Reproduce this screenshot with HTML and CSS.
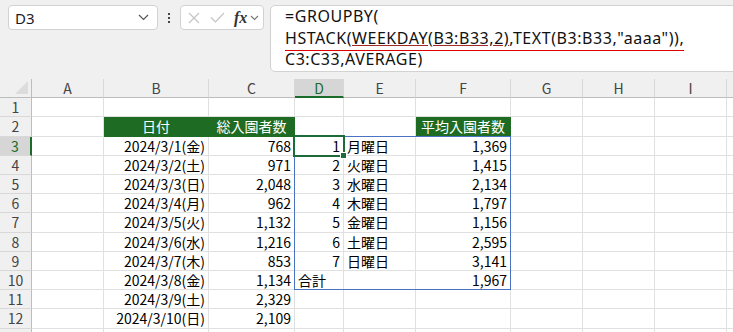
FILE: index.html
```html
<!DOCTYPE html>
<html lang="ja">
  <head>
    <meta charset="UTF-8" />
    <meta name="viewport" content="width=device-width, initial-scale=1" />
    <title>GROUPBY - 曜日別平均入園者数</title>
    <link rel="stylesheet" href="styles.css">
  </head>
  <body>
    <header class="topbar">
      <div class="namebox">
        <span class="namebox-ref">D3</span>
        <svg class="chevron" width="11" height="7" viewBox="0 0 11 7">
          <path d="M1 1l4.5 4.5L10 1" fill="none" stroke="#555" stroke-width="1.2" />
        </svg>
      </div>
      <div class="dots"><i></i><i></i><i></i></div>
      <div class="fxbox">
        <svg width="12" height="12" viewBox="0 0 12 12">
          <path d="M1 1l10 10M11 1L1 11" stroke="#c4c4c4" stroke-width="1.2" />
        </svg>
        <svg width="15" height="11" viewBox="0 0 15 11">
          <path d="M1 5.5l4.5 4.5L14 1" fill="none" stroke="#c4c4c4" stroke-width="1.2" />
        </svg>
        <span class="fx">fx</span>
        <svg width="9" height="6" viewBox="0 0 9 6">
          <path d="M1 1l3.5 3.5L8 1" fill="none" stroke="#777" stroke-width="1.1" />
        </svg>
      </div>
      <div class="formula">
        <div>=GROUPBY(</div>
        <div><span class="err">HSTACK(<span class="warn">WEEKDAY(B3:B33,2)</span>,TEXT(B3:B33,"aaaa")),</span></div>
        <div>C3:C33,AVERAGE)</div>
      </div>
    </header>

    <main class="sheet" id="sheet">
      <div class="spill"></div>
      <div class="selection"><span class="handle"></span></div>
    </main>

    <script>
      const columns = ["A", "B", "C", "D", "E", "F", "G", "H", "I", ""];

      // 行ごとのセル内容（A〜F列）
      const rows = [
        [],
        ["", { text: "日付", cls: "head" }, { text: "総入園者数", cls: "head" }, "", "", { text: "平均入園者数", cls: "head" }],
        ["", "2024/3/1(金)", "768", "1", { text: "月曜日", cls: "left" }, "1,369"],
        ["", "2024/3/2(土)", "971", "2", { text: "火曜日", cls: "left" }, "1,415"],
        ["", "2024/3/3(日)", "2,048", "3", { text: "水曜日", cls: "left" }, "2,134"],
        ["", "2024/3/4(月)", "962", "4", { text: "木曜日", cls: "left" }, "1,797"],
        ["", "2024/3/5(火)", "1,132", "5", { text: "金曜日", cls: "left" }, "1,156"],
        ["", "2024/3/6(水)", "1,216", "6", { text: "土曜日", cls: "left" }, "2,595"],
        ["", "2024/3/7(木)", "853", "7", { text: "日曜日", cls: "left" }, "3,141"],
        ["", "2024/3/8(金)", "1,134", { text: "合計", cls: "left" }, "", "1,967"],
        ["", "2024/3/9(土)", "2,329"],
        ["", "2024/3/10(日)", "2,109"],
        ["", "2024/3/11(月)", ""],
      ];

      function makeCell(className, text) {
        const cell = document.createElement("div");
        cell.className = className;
        cell.textContent = text || "";
        return cell;
      }

      document.addEventListener("DOMContentLoaded", () => {
        const sheet = document.getElementById("sheet");

        sheet.appendChild(makeCell("corner"));
        columns.forEach((col) => {
          const cls = col === "D" ? "colhead active" : "colhead";
          sheet.appendChild(makeCell(cls, col));
        });

        rows.forEach((row, r) => {
          const num = r + 1;
          sheet.appendChild(makeCell(num === 3 ? "rowhead active" : "rowhead", num));
          columns.forEach((col, c) => {
            const value = row[c];
            let cls = "cell";
            let text = "";
            if (value && typeof value === "object") {
              cls += " " + value.cls;
              text = value.text;
            } else if (value) {
              text = value;
            }
            sheet.appendChild(makeCell(cls, text));
          });
        });
      });
    </script>
  </body>
</html>
```

FILE: styles.css
```css
* {
  margin: 0;
  padding: 0;
  box-sizing: border-box;
}
body {
  background: #f0f0f0;
  color: #000;
  width: 733px;
  height: 332px;
  overflow: hidden;
  font-family: "Noto Sans", "Noto Sans CJK JP", sans-serif;
}

/* Formula bar */
.topbar {
  height: 79px;
  display: flex;
  align-items: flex-start;
  padding: 5px 0 0 8px;
}
.namebox {
  width: 150px;
  height: 25px;
  background: #fff;
  border: 1px solid #d2d2d2;
  border-radius: 4px;
  display: flex;
  align-items: center;
  justify-content: space-between;
  padding: 0 8px 0 6px;
}
.namebox-ref {
  font-size: 15px;
  color: #1a1a2a;
}
.dots {
  width: 22px;
  height: 25px;
  display: flex;
  flex-direction: column;
  align-items: center;
  justify-content: center;
  gap: 2px;
}
.dots i {
  width: 2px;
  height: 2px;
  background: #444;
}
.fxbox {
  width: 84px;
  height: 25px;
  background: #fff;
  border: 1px solid #d2d2d2;
  border-radius: 4px;
  display: flex;
  align-items: center;
  padding: 0 3px 0 7px;
}
.fxbox svg:nth-child(2) {
  margin-left: 10px;
}
.fx {
  font-family: "Liberation Serif", serif;
  font-style: italic;
  font-weight: bold;
  font-size: 16px;
  color: #333;
  margin-left: 9px;
  margin-right: 3px;
  line-height: 1;
}
.formula {
  flex: 1;
  margin-left: 6px;
  margin-right: -10px;
  height: 67px;
  background: #fff;
  border: 1px solid #d2d2d2;
  border-radius: 5px;
  padding: 0 0 0 14px;
  font-size: 16px;
  letter-spacing: 0.55px;
  line-height: 21.5px;
  color: #111;
}
.err {
  border-bottom: 1px solid #e00000;
  padding-bottom: 1px;
}
.warn {
  text-decoration: underline;
  text-decoration-color: #a02828;
  text-underline-offset: 1px;
}

/* Worksheet */
.sheet {
  position: relative;
  display: grid;
  grid-template-columns: 32px 72px 105px 86px 49px 72px 95px 72px 72px 72px 1fr;
  grid-template-rows: 19.3px;
  grid-auto-rows: 19.2px;
  background: #fff;
  font-family: "Noto Sans CJK JP", sans-serif;
  font-size: 14px;
}
.corner {
  position: relative;
  background: #f0f0f0;
  border-right: 1px solid #bdbdbd;
  border-bottom: 1px solid #bdbdbd;
}
.corner::after {
  content: "";
  position: absolute;
  right: 3px;
  bottom: 3px;
  border-left: 13px solid transparent;
  border-bottom: 13px solid #dcdcdc;
}
.colhead {
  background: #f0f0f0;
  color: #444;
  text-align: center;
  line-height: 18px;
  border-right: 1px solid #d8d8d8;
  border-bottom: 1px solid #bdbdbd;
}
.colhead.active {
  background: #d6d6d6;
  color: #1d6b2b;
  border-bottom: 2px solid #1d6b2b;
}
.rowhead {
  background: #f0f0f0;
  color: #444;
  text-align: center;
  line-height: 18.5px;
  border-right: 1px solid #bdbdbd;
  border-bottom: 1px solid #d8d8d8;
}
.rowhead.active {
  background: #d6d6d6;
  color: #1d6b2b;
  border-right: 2px solid #1d6b2b;
}
.cell {
  text-align: right;
  padding: 0 3px;
  line-height: 18.5px;
  white-space: nowrap;
  overflow: hidden;
  border-right: 1px solid #e0e0e0;
  border-bottom: 1px solid #e0e0e0;
}
.cell.left {
  text-align: left;
}
.cell.head {
  background: #1e6b24;
  color: #fff;
  text-align: center;
  border-color: #1e6b24;
}

/* Spill range and active cell */
.spill {
  position: absolute;
  grid-column: 5 / 8;
  grid-row: 4 / 12;
  top: -1px;
  left: -1px;
  right: 0;
  bottom: 0;
  border: 1px solid #4a72c2;
  pointer-events: none;
  z-index: 1;
}
.selection {
  position: absolute;
  grid-column: 5 / 6;
  grid-row: 4 / 5;
  top: -2px;
  left: -2px;
  right: -1px;
  bottom: -1px;
  border: 2px solid #1d6b3a;
  z-index: 2;
}
.handle {
  position: absolute;
  right: -4px;
  bottom: -4px;
  width: 7px;
  height: 7px;
  background: #1d6b3a;
  border: 1px solid #fff;
}
```
